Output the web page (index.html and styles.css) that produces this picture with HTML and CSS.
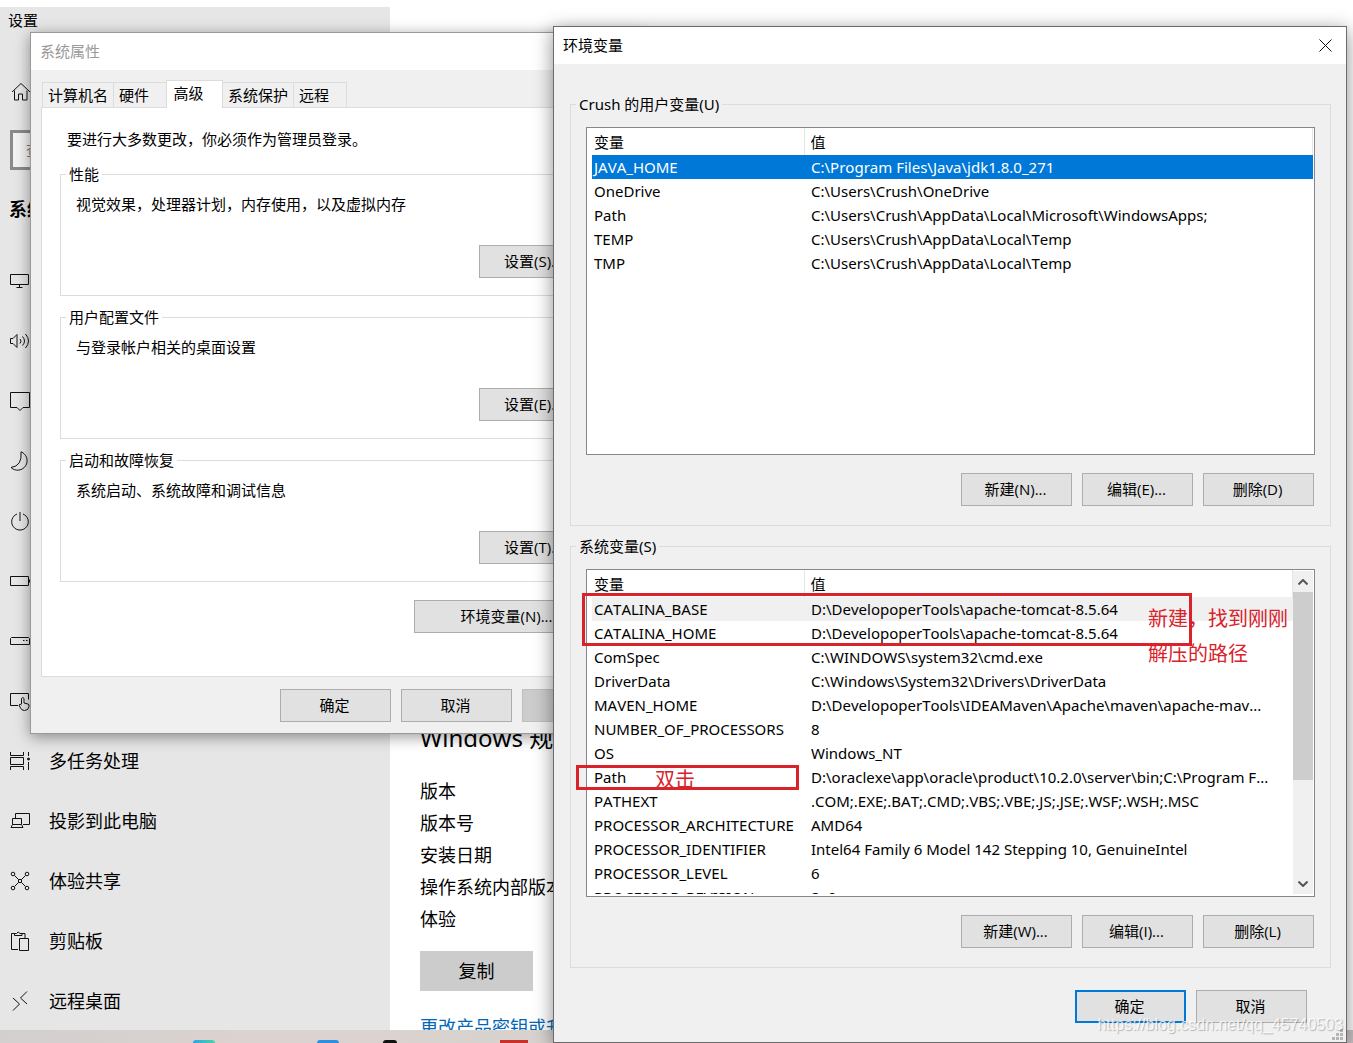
FILE: index.html
```html
<!DOCTYPE html>
<html lang="zh-CN">
<head>
<meta charset="utf-8">
<title>环境变量</title>
<link rel="stylesheet" href="styles.css">
</head>
<body>
<div class="desktop">
  <section class="settings" aria-label="设置">
    <nav class="sidebar">
      <h1 class="app-title">设置</h1>
      <a class="nav-item home" href="#" aria-label="主页"><svg class="icon" viewBox="0 0 20 20"><path d="M2 10 11 1.500l9 8.500M4.500 8.500V18h4v-6h4v6h4.500V8.500"/></svg></a>
      <input class="search" type="text" placeholder="查找设置" aria-label="查找设置">
      <h2 class="nav-heading">系统</h2>
      <a class="nav-item" href="#" aria-label="显示"><svg class="icon" viewBox="0 0 20 20"><path d="M.5 3.500h18v10H.5zM9.500 13.500v3M6.500 16.500h6"/></svg></a>
      <a class="nav-item" href="#" aria-label="声音"><svg class="icon" viewBox="0 0 20 20"><path d="M.5 7.500h2.500l4-4v13l-4-4H.5zM10 8q2 2 0 4.500M12.500 5.500q4 4.500 0 9M15.500 3q6 7 0 14"/></svg></a>
      <a class="nav-item" href="#" aria-label="通知和操作"><svg class="icon" viewBox="0 0 20 20"><path d="M.5 1.500h19v15h-6.500l-3 3-3-3H.5z"/></svg></a>
      <a class="nav-item" href="#" aria-label="专注助手"><svg class="icon" viewBox="0 0 20 20"><path d="M11 .8a9.500 9.500 0 1 1-10 15.700Q12.500 15 11 .8z"/></svg></a>
      <a class="nav-item" href="#" aria-label="电源和睡眠"><svg class="icon" viewBox="0 0 20 20"><path d="M7 3a8.300 8.300 0 1 0 6 0M10 1v9"/></svg></a>
      <a class="nav-item" href="#" aria-label="电池"><svg class="icon" viewBox="0 0 20 20"><path d="M.5 5.500h18v9H.5zM19.500 8.500v3"/></svg></a>
      <a class="nav-item" href="#" aria-label="存储"><svg class="icon" viewBox="0 0 20 20"><path d="M1.500 6.500h17l1 1v6H.5v-6zM13 9.500h1.500M16 9.500h1.500"/></svg></a>
      <a class="nav-item" href="#" aria-label="平板电脑"><svg class="icon" viewBox="0 0 20 20"><path d="M8 14.500H.5v-12h18v6M11.500 13V7.500q1.500-2 2.500 0V12l4 1q1.500.5 1 2.500-.5 4-4.500 4-3 0-4-2.500L9 14q1-1.500 2.500 0"/></svg></a>
      <a class="nav-item" href="#"><svg class="icon" viewBox="0 0 20 20"><path d="M.5 1v3.500h13V1M.5 19v-3.500h13V19M.5 6.500h13v7H.5zM18.500 1v4M18.500 11v8"/><circle class="dot" cx="18.500" cy="8" r="1"/></svg>多任务处理</a>
      <a class="nav-item" href="#"><svg class="icon" viewBox="0 0 20 20"><path d="M5.500 7V2.500h14v11H13M2.500 13.500v-6h9v6M2.500 13.500h9l1.500 3H1z"/></svg>投影到此电脑</a>
      <a class="nav-item" href="#"><svg class="icon" viewBox="0 0 20 20"><path d="M4.500 4.500l4 4M15.500 4.500l-4 4M4.500 15.500l4-4M15.500 15.500l-4-4M8.500 8.500h3v3h-3z"/><circle cx="3" cy="3" r="1.800"/><circle cx="17" cy="3" r="1.800"/><circle cx="3" cy="17" r="1.800"/><circle cx="17" cy="17" r="1.800"/></svg>体验共享</a>
      <a class="nav-item" href="#"><svg class="icon" viewBox="0 0 20 20"><path d="M8 18.500H1.500v-16h3M12 2.500h3V7M4.500 4.500v-2h2Q8-.5 10 2.500h2v2zM9.500 7.500h9v12h-9z"/></svg>剪贴板</a>
      <a class="nav-item" href="#"><svg class="icon" viewBox="0 0 20 20"><path d="M3 7l6.500 6L3 19.500M17 .5l-6.500 6.500 6.500 6"/></svg>远程桌面</a>
    </nav>
    <main class="about">
      <h2 class="about-title">Windows 规格</h2>
      <ul class="spec-list">
        <li>版本</li>
        <li>版本号</li>
        <li>安装日期</li>
        <li>操作系统内部版本</li>
        <li>体验</li>
      </ul>
      <button class="copy-button" type="button">复制</button>
      <a class="about-link" href="#">更改产品密钥或升级 Windows</a>
    </main>
  </section>

  <footer class="taskbar" aria-hidden="true">
    <i class="app edge"></i><i class="app browser"></i><i class="app penguin"></i><i class="app ide"></i>
  </footer>

  <section class="window properties" aria-label="系统属性">
    <header class="titlebar">系统属性</header>
    <div class="properties-body">
      <div class="tabs" role="tablist">
        <button class="tab" type="button" role="tab">计算机名</button>
        <button class="tab tab-wide" type="button" role="tab">硬件</button>
        <button class="tab tab-active" type="button" role="tab" aria-selected="true">高级</button>
        <button class="tab" type="button" role="tab">系统保护</button>
        <button class="tab tab-wide" type="button" role="tab">远程</button>
      </div>
      <div class="tab-panel" role="tabpanel">
        <p class="notice">要进行大多数更改，你必须作为管理员登录。</p>
        <fieldset class="group option-group">
          <legend>性能</legend>
          <p>视觉效果，处理器计划，内存使用，以及虚拟内存</p>
          <button class="button" type="button">设置(S)...</button>
        </fieldset>
        <fieldset class="group option-group">
          <legend>用户配置文件</legend>
          <p>与登录帐户相关的桌面设置</p>
          <button class="button" type="button">设置(E)...</button>
        </fieldset>
        <fieldset class="group option-group">
          <legend>启动和故障恢复</legend>
          <p>系统启动、系统故障和调试信息</p>
          <button class="button" type="button">设置(T)...</button>
        </fieldset>
        <button class="button env-button" type="button">环境变量(N)...</button>
      </div>
      <div class="actions">
        <button class="button" type="button">确定</button>
        <button class="button" type="button">取消</button>
        <button class="button" type="button" disabled>应用(A)</button>
      </div>
    </div>
  </section>

  <section class="window environment" aria-label="环境变量">
    <header class="titlebar">环境变量
      <button class="close" type="button" aria-label="关闭"><svg viewBox="0 0 13 13"><path d="M.5.5l12 12M12.500.5l-12 12"/></svg></button>
    </header>
    <div class="environment-body">
      <fieldset class="group variable-group">
        <legend>Crush 的用户变量(U)</legend>
        <div class="listbox">
          <div class="list-view">
            <table class="variables">
              <thead><tr><th class="name">变量</th><th>值</th></tr></thead>
              <tbody>
                <tr class="selected"><td>JAVA_HOME</td><td>C:\Program Files\Java\jdk1.8.0_271</td></tr>
                <tr><td>OneDrive</td><td>C:\Users\Crush\OneDrive</td></tr>
                <tr><td>Path</td><td>C:\Users\Crush\AppData\Local\Microsoft\WindowsApps;</td></tr>
                <tr><td>TEMP</td><td>C:\Users\Crush\AppData\Local\Temp</td></tr>
                <tr><td>TMP</td><td>C:\Users\Crush\AppData\Local\Temp</td></tr>
              </tbody>
            </table>
          </div>
        </div>
        <div class="actions">
          <button class="button" type="button">新建(N)...</button>
          <button class="button" type="button">编辑(E)...</button>
          <button class="button" type="button">删除(D)</button>
        </div>
      </fieldset>

      <fieldset class="group variable-group">
        <legend>系统变量(S)</legend>
        <div class="listbox">
          <div class="list-view">
            <table class="variables">
              <thead><tr><th class="name">变量</th><th>值</th></tr></thead>
              <tbody>
                <tr class="focused"><td>CATALINA_BASE</td><td>D:\DevelopoperTools\apache-tomcat-8.5.64</td></tr>
                <tr><td>CATALINA_HOME</td><td>D:\DevelopoperTools\apache-tomcat-8.5.64</td></tr>
                <tr><td>ComSpec</td><td>C:\WINDOWS\system32\cmd.exe</td></tr>
                <tr><td>DriverData</td><td>C:\Windows\System32\Drivers\DriverData</td></tr>
                <tr><td>MAVEN_HOME</td><td>D:\DevelopoperTools\IDEAMaven\Apache\maven\apache-mav...</td></tr>
                <tr><td>NUMBER_OF_PROCESSORS</td><td>8</td></tr>
                <tr><td>OS</td><td>Windows_NT</td></tr>
                <tr><td>Path</td><td>D:\oraclexe\app\oracle\product\10.2.0\server\bin;C:\Program F...</td></tr>
                <tr><td>PATHEXT</td><td>.COM;.EXE;.BAT;.CMD;.VBS;.VBE;.JS;.JSE;.WSF;.WSH;.MSC</td></tr>
                <tr><td>PROCESSOR_ARCHITECTURE</td><td>AMD64</td></tr>
                <tr><td>PROCESSOR_IDENTIFIER</td><td>Intel64 Family 6 Model 142 Stepping 10, GenuineIntel</td></tr>
                <tr><td>PROCESSOR_LEVEL</td><td>6</td></tr>
                <tr><td>PROCESSOR_REVISION</td><td>8e0a</td></tr>
              </tbody>
            </table>
          </div>
          <div class="scrollbar">
            <button type="button" aria-label="向上滚动"><svg viewBox="0 0 10 6"><path d="M.5 5.500 5 1l4.500 4.500"/></svg></button>
            <div class="track"><div class="thumb"></div></div>
            <button type="button" aria-label="向下滚动"><svg viewBox="0 0 10 6"><path d="M.5.5 5 5 9.500.5"/></svg></button>
          </div>
          <div class="mark mark-catalina"></div>
          <p class="note note-catalina">新建，找到刚刚<br>解压的路径</p>
          <div class="mark mark-path"></div>
          <p class="note note-path">双击</p>
        </div>
        <div class="actions">
          <button class="button" type="button">新建(W)...</button>
          <button class="button" type="button">编辑(I)...</button>
          <button class="button" type="button">删除(L)</button>
        </div>
      </fieldset>

      <div class="actions dialog-actions">
        <button class="button default" type="button">确定</button>
        <button class="button" type="button">取消</button>
      </div>
    </div>
    <svg class="grip" viewBox="0 0 12 12"><path d="M8 0h3v3H8zM4 4h3v3H4zM8 4h3v3H8zM0 8h3v3H0zM4 8h3v3H4zM8 8h3v3H8z"/></svg>
  </section>
  <span class="watermark">https://blog.csdn.net/qq_45740503</span>
</div>
</body>
</html>
```
FILE: styles.css
```css
* {
  box-sizing: border-box;
}

body,
h1,
h2,
p,
ul,
fieldset {
  margin: 0;
  padding: 0;
}

body {
  background: #fff;
  color: #000;
  font: 15px/20px "Noto Sans", "Noto Sans CJK SC", sans-serif;
  font-kerning: none;
}

button,
input {
  color: inherit;
  font: inherit;
  font-kerning: none;
}

svg {
  display: block;
  fill: none;
  stroke: #111;
}

.desktop {
  position: relative;
  display: flex;
  flex-direction: column;
  height: 100vh;
  min-height: 1043px;
  padding-top: 7px;
  overflow: hidden;
}

/* Settings app */
.settings {
  display: flex;
  flex: 1;
  min-height: 0;
  overflow: hidden;
}

.sidebar {
  display: flex;
  flex-direction: column;
  width: 390px;
  flex-shrink: 0;
  background: #e6e6e6;
}

.app-title {
  padding: 3px 8px;
  font-size: 15px;
  font-weight: 400;
}

.nav-item {
  display: flex;
  align-items: center;
  gap: 19px;
  height: 60px;
  flex-shrink: 0;
  padding-left: 10px;
  color: #000;
  font-size: 18px;
  text-decoration: none;
}

.home {
  margin-top: 29px;
}

.icon {
  width: 20px;
  height: 20px;
}

.dot {
  fill: #111;
}

.search {
  width: 370px;
  height: 40px;
  margin: 8px 10px 0;
  padding: 0 13px;
  border: 3px solid #8a8a8a;
  background: #f2f2f2;
  flex-shrink: 0;
}

.nav-heading {
  margin: 29px 0 32px 9px;
  font-size: 18px;
  font-weight: 700;
}

.about {
  flex: 1;
  min-width: 0;
  padding: 716px 30px 0;
  overflow: hidden;
}

.about-title {
  margin-bottom: 22px;
  font-size: 24px;
  font-weight: 400;
  line-height: 30px;
}

.spec-list {
  margin-bottom: 16px;
  font-size: 18px;
  line-height: 32px;
  list-style: none;
}

.about-title,
.spec-list,
.about-link {
  white-space: nowrap;
}

.copy-button {
  display: block;
  width: 113px;
  height: 40px;
  margin-bottom: 26px;
  border: 0;
  background: #ccc;
  font-size: 18px;
}

.about-link {
  color: #0067b8;
  font-size: 18px;
  text-decoration: none;
}

.taskbar {
  display: flex;
  align-items: flex-end;
  height: 13px;
  flex-shrink: 0;
  background: linear-gradient(90deg, #d3cfcf, #dbd3cf 20%, #d6d2cf 50%, #cbc3c5);
}

.app {
  width: 22px;
  height: 3px;
  border-radius: 11px 11px 0 0;
}

.edge {
  margin-left: 193px;
  background: linear-gradient(90deg, #27a8e0, #4fd0a8);
}

.browser {
  margin-left: 102px;
  background: #2c8fe0;
}

.penguin {
  width: 14px;
  margin-left: 44px;
  background: #111;
}

.ide {
  width: 28px;
  margin-left: 103px;
  border-radius: 0;
  background: #c8302a;
}

/* Classic windows */
.window {
  position: absolute;
  background: #f0f0f0;
}

.titlebar {
  display: flex;
  align-items: center;
  justify-content: space-between;
  height: 37px;
  padding: 0 14px 1px 9px;
  background: #fff;
}

.group {
  min-width: 0;
  border: 1px solid #dcdcdc;
}

/* Pulled back over the group's side padding */
.group legend {
  margin-left: -10px;
  padding: 0 3px;
}

.actions {
  display: flex;
  justify-content: flex-end;
  gap: 10px;
}

.button {
  width: 111px;
  height: 33px;
  padding: 0 2px 2px 0;
  border: 1px solid #adadad;
  background: #e1e1e1;
  font-family: "Open Sans", "Noto Sans CJK SC", sans-serif;
}

.button:disabled {
  border-color: #bfbfbf;
  background: #ccc;
  color: #838383;
}

.default {
  border: 2px solid #0078d7;
}

.properties {
  top: 32px;
  left: 30px;
  width: 614px;
  border: 1px solid #999;
  box-shadow: 0 3px 14px rgba(0, 0, 0, 0.4);
}

.properties .titlebar {
  color: #999;
}

.properties-body {
  padding: 10px 10px 11px;
}

.tabs {
  display: flex;
  align-items: flex-end;
  padding-left: 1px;
}

.tab {
  height: 25px;
  padding: 0 5px;
  border: 1px solid #dcdcdc;
  border-width: 1px 0 0 1px;
  background: #f0f0f0;
}

.tab-wide {
  padding-right: 17px;
}

.tab:last-child {
  border-right-width: 1px;
}

.tab-active {
  position: relative;
  width: 57px;
  height: 28px;
  margin-bottom: -1px;
  padding: 0 18px 3px 6px;
  border-right-width: 1px;
  background: #fff;
}

.tab-active + .tab {
  border-left-width: 0;
}

.tab-panel {
  display: flex;
  flex-direction: column;
  margin-bottom: 12px;
  padding: 21px 18px 43px;
  border: 1px solid #dcdcdc;
  background: #fff;
}

.notice {
  margin: 0 0 15px 7px;
}

.option-group {
  height: 132px;
  margin-bottom: 11px;
  padding: 10px 23px 17px 15px;
}

.option-group .button {
  display: block;
  margin: 31px 0 0 auto;
}

.env-button {
  align-self: flex-end;
  width: 187px;
  margin: 7px 13px 0 0;
}

.environment {
  top: 26px;
  right: 6px;
  left: 553px;
  border: 1px solid #6b6b6b;
  box-shadow: 0 4px 18px rgba(0, 0, 0, 0.45);
}

.close {
  padding: 0;
  border: 0;
  background: none;
}

.close svg {
  width: 13px;
  height: 13px;
}

.environment-body {
  padding: 30px 15px 19px 16px;
}

.variable-group {
  margin-bottom: 10px;
  padding: 13px 15px 19px;
}

.variable-group .actions {
  padding-right: 1px;
}

.listbox {
  position: relative;
  display: flex;
  height: 328px;
  margin-bottom: 18px;
  padding: 0 1px 2px 5px;
  border: 1px solid #828790;
  background: #fff;
}

.list-view {
  flex: 1;
  min-width: 0;
  overflow: hidden;
}

.variables {
  width: 100%;
  border-collapse: collapse;
  table-layout: fixed;
}

.variables th,
.variables td {
  height: 24px;
  padding: 0 0 0 7px;
  line-height: 20px;
  text-align: left;
  white-space: nowrap;
}

.variables th {
  height: 27px;
  padding-left: 6px;
  border-right: 1px solid #e5e5e5;
  font-weight: 400;
}

.variables .name {
  width: 212px;
}

.variables th:first-child,
.variables td:first-child {
  padding-left: 2px;
}

.selected {
  background: #0078d7;
  color: #fff;
}

.focused {
  background: #f0f0f0;
}

.scrollbar {
  display: flex;
  flex-direction: column;
  width: 20px;
  margin-top: 1px;
  background: #f0f0f0;
}

.scrollbar button {
  display: flex;
  align-items: center;
  justify-content: center;
  height: 21px;
  padding: 0;
  border: 0;
  background: none;
}

.scrollbar svg {
  width: 10px;
  height: 6px;
  stroke: #555;
  stroke-width: 2;
}

.track {
  flex: 1;
}

.thumb {
  height: 188px;
  background: #cdcdcd;
}

/* Tutorial annotations lying over the list */
.mark,
.note {
  position: absolute;
}

.mark {
  border: 3px solid #d9222a;
}

.mark-catalina {
  top: 23px;
  left: -5px;
  width: 610px;
  height: 53px;
}

.mark-path {
  top: 195px;
  left: -11px;
  width: 223px;
  height: 25px;
}

.note {
  color: #d9222a;
  font-size: 20px;
  line-height: 35px;
  white-space: nowrap;
}

.note-catalina {
  top: 31px;
  left: 561px;
}

.note-path {
  top: 192px;
  left: 68px;
}

.dialog-actions {
  margin-top: 22px;
  padding-right: 24px;
}

.grip {
  position: absolute;
  right: 2px;
  bottom: 1px;
  width: 12px;
  height: 12px;
  fill: #b5b5b5;
  stroke: none;
}

.watermark {
  position: absolute;
  right: 10px;
  bottom: 8px;
  color: rgba(255, 255, 255, 0.8);
  font: 16px/20px "Liberation Sans", sans-serif;
  text-shadow: 1px 1px 1px rgba(0, 0, 0, 0.25);
}
```
